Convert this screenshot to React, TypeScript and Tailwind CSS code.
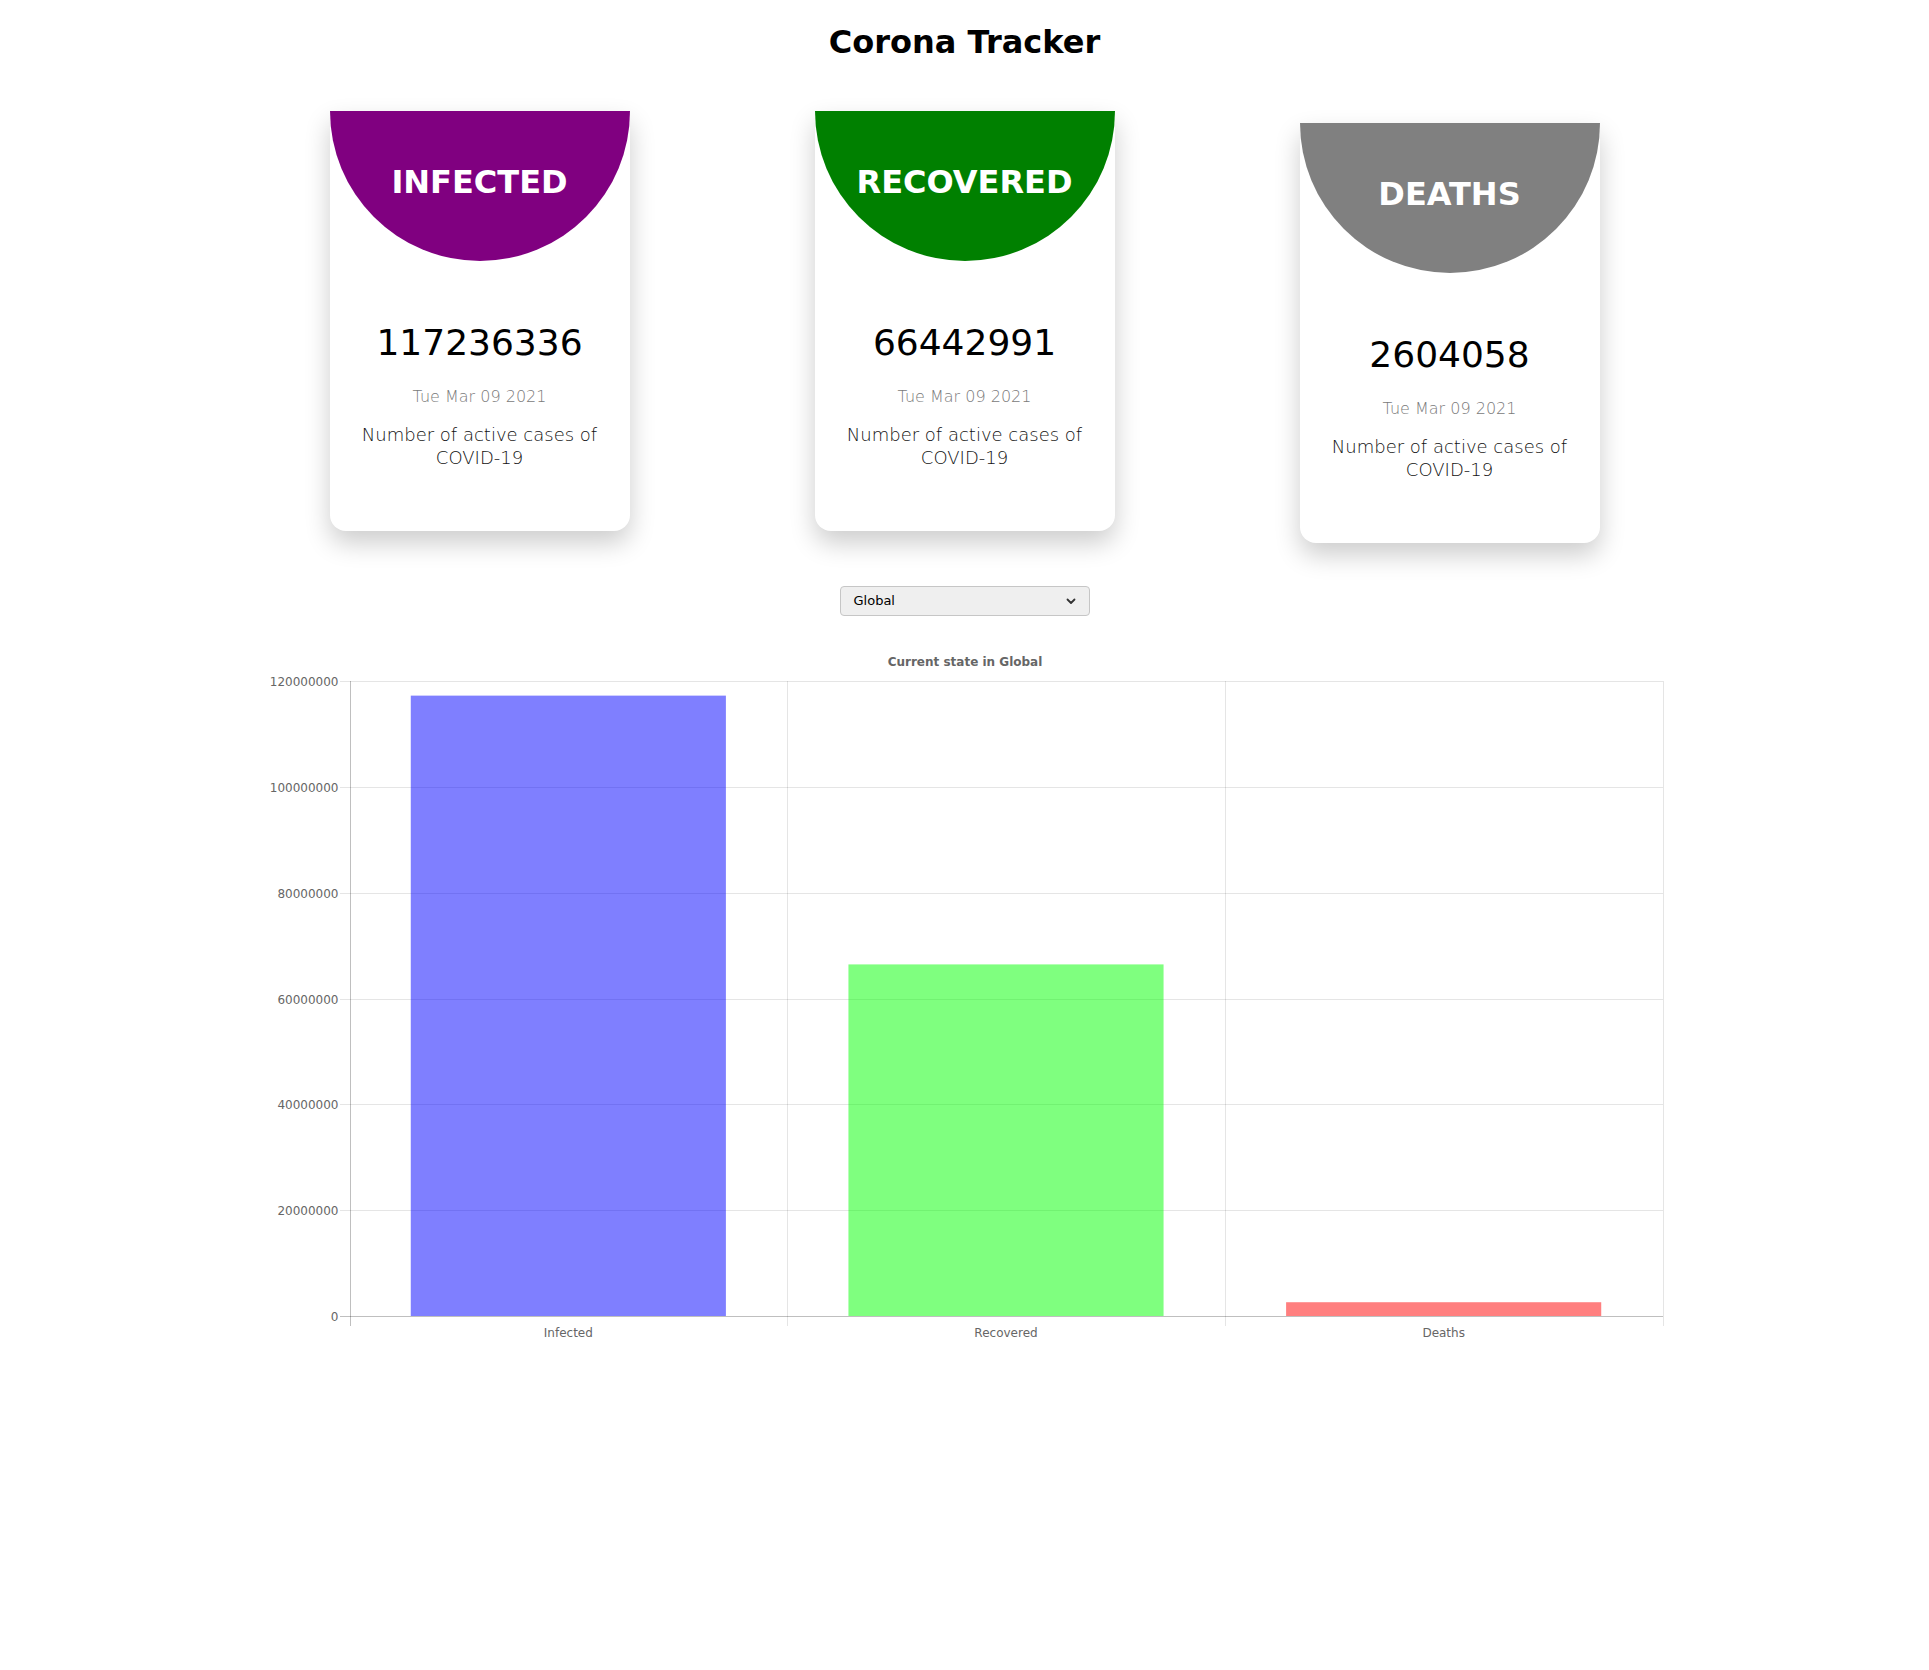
import React from 'react';

// card data for the three totals
const cards = [
   { title: 'INFECTED', value: '117236336', color: 'bg-[#800080]', offset: '' },
   { title: 'RECOVERED', value: '66442991', color: 'bg-[#008000]', offset: '' },
   { title: 'DEATHS', value: '2604058', color: 'bg-[#808080]', offset: 'mt-[12px]' },
];

const bars = [
   { label: 'Infected', value: 117236336, fill: 'rgba(0,0,255,0.5)' },
   { label: 'Recovered', value: 66442991, fill: 'rgba(0,255,0,0.5)' },
   { label: 'Deaths', value: 2604058, fill: 'rgba(255,0,0,0.5)' },
];

const Card = ({ title, value, color, offset }) => {
   return (
      <div className={`flex h-[420px] w-[300px] flex-col items-center rounded-b-[16px] bg-white shadow-[0_12px_26px_rgba(0,0,0,0.2)] ${offset}`}>
         <div className={`flex h-[150px] w-full justify-center rounded-b-[150px] pt-[52px] ${color}`}>
            <span className="text-[32px] font-bold leading-[38px] text-white">{title}</span>
         </div>
         <div className="mt-[60px] text-[36px] leading-[44px] text-black">{value}</div>
         <div className="mt-[20px] text-[16px] font-light leading-[24px] text-[#7a7a7a]">Tue Mar 09 2021</div>
         <p className="mt-[14px] px-[25px] text-center text-[18px] font-light leading-[23px] text-[#111]">
            Number of active cases of COVID-19
         </p>
      </div>
   );
};

const Chart = () => {
   // chart area in svg coords
   const x0 = 84.5;
   const x1 = 1397.5;
   const top = 40;
   const base = 675;
   const max = 120000000;
   const cat = (x1 - x0) / 3;
   const ticks = [0, 20000000, 40000000, 60000000, 80000000, 100000000, 120000000];
   const yOf = (v) => base - (v / max) * (base - top);

   return (
      <div className="mx-auto w-[1400px]">
         <svg width="1400" height="710" viewBox="0 0 1400 710" fontFamily="'DejaVu Sans', sans-serif">
            <text x="700" y="25" textAnchor="middle" fontSize="12" fontWeight="bold" fill="#666">
               Current state in Global
            </text>
            {/* horizontal grid + y ticks */}
            {ticks.map((t) => {
               const y = Math.round(yOf(t)) + 0.5;
               return (
                  <g key={t}>
                     <line
                        x1={x0 - 10}
                        x2={x1}
                        y1={y}
                        y2={y}
                        stroke={t === 0 ? 'rgba(0,0,0,0.25)' : 'rgba(0,0,0,0.1)'}
                        shapeRendering="crispEdges"
                     />
                     <text x={x0 - 11} y={y + 4} textAnchor="end" fontSize="12" fill="#666">
                        {t}
                     </text>
                  </g>
               );
            })}
            {/* vertical grid */}
            {[0, 1, 2, 3].map((i) => {
               const x = Math.round(x0 + i * cat) + 0.5;
               return (
                  <line
                     key={i}
                     x1={x}
                     x2={x}
                     y1={top}
                     y2={base + 10}
                     stroke={i === 0 ? 'rgba(0,0,0,0.25)' : 'rgba(0,0,0,0.1)'}
                     shapeRendering="crispEdges"
                  />
               );
            })}
            {/* bars */}
            {bars.map((b, i) => {
               const w = cat * 0.72;
               const cx = x0 + cat * i + cat / 2;
               const y = yOf(b.value);
               return (
                  <g key={b.label}>
                     <rect x={cx - w / 2} y={y} width={w} height={base - y} fill={b.fill} />
                     <text x={cx} y={696} textAnchor="middle" fontSize="12" fill="#666">
                        {b.label}
                     </text>
                  </g>
               );
            })}
         </svg>
      </div>
   );
};

const App = () => {
   return (
      <div className="min-h-[1670px] bg-white font-['DejaVu_Sans',sans-serif]">
         <h1 className="pt-[23px] text-center text-[32px] font-bold leading-[38px] text-black">Corona Tracker</h1>

         {/* cards row */}
         <div className="mt-[50px] flex items-start justify-center gap-[185px]">
            {cards.map((c) => (
               <Card key={c.title} {...c} />
            ))}
         </div>

         {/* country picker */}
         <div className="mt-[43px] flex justify-center">
            <div className="flex h-[30px] w-[250px] items-center justify-between rounded-[4px] border border-[#c6c6c6] bg-[#efefef] pl-[13px] pr-[12px] text-[13px] text-black">
               <span>Global</span>
               <svg width="12" height="12" viewBox="0 0 12 12">
                  <path d="M2.5 4.5 L6 8 L9.5 4.5" fill="none" stroke="#333" strokeWidth="1.8" strokeLinecap="round" strokeLinejoin="round" />
               </svg>
            </div>
         </div>

         <div className="mt-[25px]">
            <Chart />
         </div>
      </div>
   );
};

export default App;
